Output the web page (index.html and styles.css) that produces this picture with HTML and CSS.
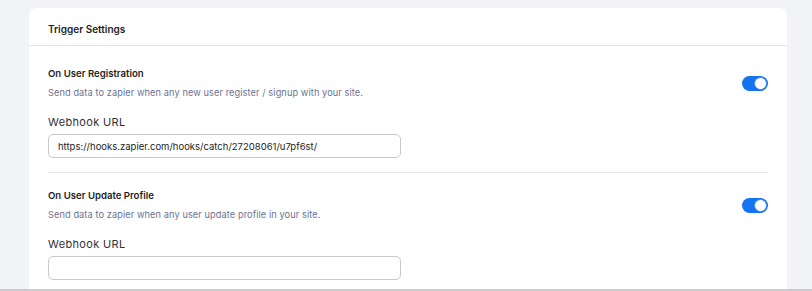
FILE: index.html
```html
<!DOCTYPE html>
<html lang="en">
<head>
    <meta charset="UTF-8">
    <meta name="viewport" content="width=device-width, initial-scale=1.0">
    <title>Zapier Integration - Trigger Settings</title>
    <link rel="stylesheet" href="styles.css">
</head>
<body>
    <div class="page">
        <div class="card">
            <div class="card-header">Trigger Settings</div>

            <div class="card-body">
                <div class="trigger">
                    <div class="trigger-head">
                        <div>
                            <div class="trigger-title">On User Registration</div>
                            <div class="trigger-desc">Send data to zapier when any new user register / signup with your site.</div>
                        </div>
                        <label class="switch">
                            <input type="checkbox" checked>
                            <span class="slider"></span>
                        </label>
                    </div>
                    <div class="form-group">
                        <label for="hook-register">Webhook URL</label>
                        <input type="text" id="hook-register" value="https://hooks.zapier.com/hooks/catch/27208061/u7pf6st/">
                    </div>
                </div>

                <div class="trigger">
                    <div class="trigger-head">
                        <div>
                            <div class="trigger-title">On User Update Profile</div>
                            <div class="trigger-desc">Send data to zapier when any user update profile in your site.</div>
                        </div>
                        <label class="switch">
                            <input type="checkbox" checked>
                            <span class="slider"></span>
                        </label>
                    </div>
                    <div class="form-group">
                        <label for="hook-profile">Webhook URL</label>
                        <input type="text" id="hook-profile" value="">
                    </div>
                </div>
            </div>
        </div>
    </div>
</body>
</html>
```
FILE: styles.css
```css
body {
    margin: 0;
    background-color: #f1f3f7;
    font-family: 'Inter', 'Open Sans', sans-serif;
    color: #1d1d22;
}
.page {
    height: 291px;
    overflow: hidden;
    padding: 8px 25px 0 29px;
    border-bottom: 2px solid #cdcdcd;
    box-sizing: border-box;
}
.card {
    background-color: #fff;
    border-radius: 8px 8px 0 0;
}
.card-header {
    height: 38px;
    box-sizing: border-box;
    display: flex;
    align-items: center;
    padding: 4px 19px 0;
    border-bottom: 1px solid #e2e4e8;
    font-size: 10px;
    font-weight: 600;
}
.card-body {
    padding: 5px 19px 0;
}
.trigger {
    padding: 15px 0 14px;
    border-bottom: 1px solid #e6e7ea;
}
.trigger-head {
    display: flex;
    align-items: center;
    justify-content: space-between;
}
.trigger-title {
    font-size: 9.6px;
    font-weight: 600;
    line-height: 16px;
}
.trigger-desc {
    margin-top: 3px;
    font-size: 9.2px;
    letter-spacing: 0.1px;
    line-height: 16px;
    color: #6b7292;
}
.form-group {
    margin-top: 13px;
}
.form-group label {
    display: block;
    font-size: 11px;
    letter-spacing: 0.35px;
    line-height: 16px;
    color: #2f3136;
}
.form-group input {
    display: block;
    width: 353px;
    height: 24px;
    margin-top: 4px;
    padding: 0 9px;
    box-sizing: border-box;
    border: 1px solid #c9cacd;
    border-radius: 5px;
    font-family: inherit;
    font-size: 9.5px;
    color: #1d1d22;
}
.switch {
    position: relative;
    width: 26px;
    height: 15px;
    flex-shrink: 0;
}
.switch input {
    display: none;
}
.slider {
    display: block;
    width: 100%;
    height: 100%;
    border-radius: 8px;
    background-color: #1473f0;
}
.slider::after {
    content: '';
    position: absolute;
    top: 1px;
    right: 1px;
    width: 11px;
    height: 11px;
    border-radius: 50%;
    background-color: #fff;
    border: 1px solid #3d8af5;
}
```
